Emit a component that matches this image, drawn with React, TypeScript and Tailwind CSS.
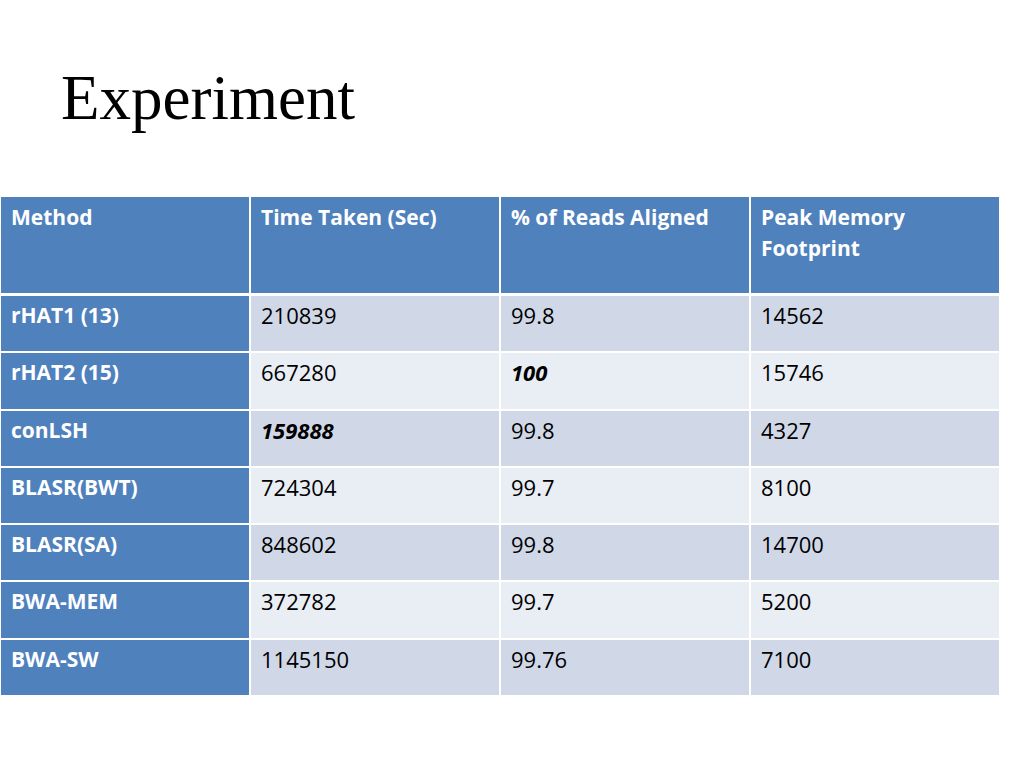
const header = ['Method', 'Time Taken (Sec)', '% of Reads Aligned', 'Peak Memory Footprint'];

type Row = { method: string; time: string; reads: string; memory: string; boldTime?: boolean; boldReads?: boolean };

const rows: Row[] = [
  { method: 'rHAT1 (13)', time: '210839', reads: '99.8', memory: '14562' },
  { method: 'rHAT2 (15)', time: '667280', reads: '100', memory: '15746', boldReads: true },
  { method: 'conLSH', time: '159888', reads: '99.8', memory: '4327', boldTime: true },
  { method: 'BLASR(BWT)', time: '724304', reads: '99.7', memory: '8100' },
  { method: 'BLASR(SA)', time: '848602', reads: '99.8', memory: '14700' },
  { method: 'BWA-MEM', time: '372782', reads: '99.7', memory: '5200' },
  { method: 'BWA-SW', time: '1145150', reads: '99.76', memory: '7100' },
];

const App = () => {
  return (
    <div className="w-[1024px] h-[768px] bg-white overflow-hidden" style={{ fontFamily: '"Open Sans", "Liberation Sans", sans-serif' }}>
      <h1 className="pl-[61px] pt-[62px] h-[197px] text-[63px] leading-[72px] text-black" style={{ fontFamily: '"Liberation Serif", serif' }}>
        Experiment
      </h1>

      <div className="ml-px w-[998px] flex flex-col">
        {/* header row */}
        <div className="grid grid-cols-4 gap-[2px] h-[96px] mb-[3px]">
          {header.map(h => (
            <div key={h} className="bg-[#4f81bd] text-white font-bold text-[21px] leading-[31px] pl-[10px] pr-4 pt-[5px]">
              {h}
            </div>
          ))}
        </div>

        {/* body rows */}
        <div className="flex flex-col gap-[2px]">
          {rows.map((r, i) => {
            const cellBg = i % 2 === 0 ? 'bg-[#d0d8e8]' : 'bg-[#e9edf4]';
            return (
              <div key={r.method} className="grid grid-cols-4 gap-[2px] h-[55.3px] text-[22px] leading-[31px]">
                <div className="bg-[#4f81bd] text-white font-bold text-[21px] pl-[10px] pt-[4px]">{r.method}</div>
                <div className={`${cellBg} text-black pl-[10px] pt-[4px] ${r.boldTime ? 'font-bold italic' : ''}`}>{r.time}</div>
                <div className={`${cellBg} text-black pl-[10px] pt-[4px] ${r.boldReads ? 'font-bold italic' : ''}`}>{r.reads}</div>
                <div className={`${cellBg} text-black pl-[10px] pt-[4px]`}>{r.memory}</div>
              </div>
            );
          })}
        </div>
      </div>
    </div>
  );
};

export default App;
